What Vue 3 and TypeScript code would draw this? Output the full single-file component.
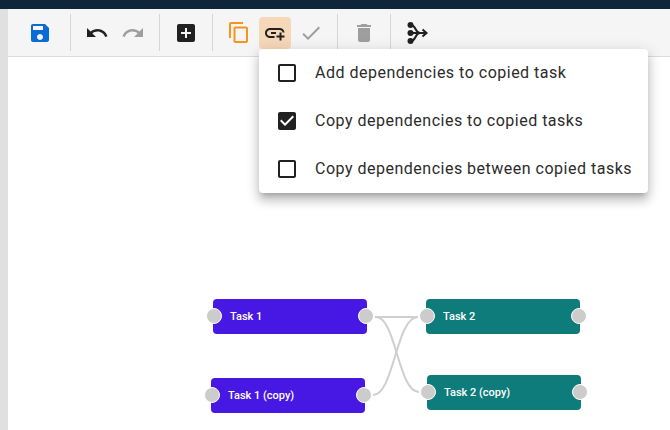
<script setup lang="ts">
interface Opt { label: string; checked: boolean }
interface TaskNode { id: string; label: string; x: number; y: number; kind: string }

const options: Opt[] = [
  { label: 'Add dependencies to copied task', checked: false },
  { label: 'Copy dependencies to copied tasks', checked: true },
  { label: 'Copy dependencies between copied tasks', checked: false },
]

const nodes: TaskNode[] = [
  { id: 'a', label: 'Task 1', x: 205, y: 242, kind: 'purple' },
  { id: 'b', label: 'Task 1 (copy)', x: 203, y: 321, kind: 'purple' },
  { id: 'c', label: 'Task 2', x: 418, y: 242, kind: 'teal' },
  { id: 'd', label: 'Task 2 (copy)', x: 419, y: 318, kind: 'teal' },
]

const edges: string[] = [
  'M375 317 H418',
  'M376 317 C396 317 398 392 419 392',
  'M373 395 C394 395 396 317 418 317',
]

const pos = (n: TaskNode) => ({ left: `${n.x}px`, top: `${n.y}px` })
</script>

<template>
  <div class="page">
    <div class="topbar"></div>
    <div class="body">
      <div class="rail"></div>
      <div class="main">
        <div class="toolbar">
          <div class="group first">
            <button class="btn"><svg viewBox="0 0 24 24" class="blue"><path d="M17 3H5c-1.11 0-2 .9-2 2v14c0 1.1.89 2 2 2h14c1.1 0 2-.9 2-2V7l-4-4zm-5 16c-1.66 0-3-1.34-3-3s1.34-3 3-3 3 1.34 3 3-1.34 3-3 3zm3-10H5V5h10v4z"/></svg></button>
          </div>
          <div class="group">
            <button class="btn"><svg viewBox="0 0 24 24" class="dark"><path d="M12.5 8c-2.65 0-5.05.99-6.9 2.6L2 7v9h9l-3.62-3.62c1.39-1.16 3.16-1.88 5.12-1.88 3.54 0 6.55 2.31 7.6 5.5l2.37-.78C21.08 11.03 17.15 8 12.5 8z"/></svg></button>
            <button class="btn"><svg viewBox="0 0 24 24" class="muted"><path d="M18.4 10.6C16.55 8.99 14.15 8 11.5 8c-4.65 0-8.58 3.03-9.96 7.22L3.9 16c1.05-3.19 4.05-5.5 7.6-5.5 1.95 0 3.73.72 5.12 1.88L13 16h9V7l-3.6 3.6z"/></svg></button>
          </div>
          <div class="group">
            <button class="btn"><svg viewBox="0 0 24 24" class="dark"><path d="M19 3H5c-1.11 0-2 .9-2 2v14c0 1.1.89 2 2 2h14c1.1 0 2-.9 2-2V5c0-1.1-.9-2-2-2zm-2 10h-4v4h-2v-4H7v-2h4V7h2v4h4v2z"/></svg></button>
          </div>
          <div class="group">
            <button class="btn"><svg viewBox="0 0 24 24" class="orange"><path d="M16 1H4c-1.1 0-2 .9-2 2v14h2V3h12V1zm3 4.5H8.5C7.4 5.5 6.5 6.4 6.5 7.5V20c0 1.1.9 2 2 2H19c1.1 0 2-.9 2-2V7.5c0-1.1-.9-2-2-2zm0 14.5H8.5V7.5H19V20z"/></svg></button>
            <button class="btn active"><svg viewBox="0 0 24 24" class="dark"><path d="M7 7C4.24 7 2 9.24 2 12S4.24 17 7 17H11.5V15.1H7C5.29 15.1 3.9 13.71 3.9 12S5.29 8.9 7 8.9H16.5C18.2 8.9 19.5 10.1 19.6 11.5H21.5C21.4 9 19.3 7 16.5 7H7M8 11V13H13V11H8M16.5 11.5V14.5H13.5V16.5H16.5V19.5H18.5V16.5H21.5V14.5H18.5V11.5H16.5"/></svg></button>
            <button class="btn"><svg viewBox="0 0 24 24" class="muted"><path d="M9 16.17L4.83 12l-1.42 1.41L9 19 21 7l-1.41-1.41z"/></svg></button>
          </div>
          <div class="group">
            <button class="btn"><svg viewBox="0 0 24 24" class="muted"><path d="M6 19c0 1.1.9 2 2 2h8c1.1 0 2-.9 2-2V7H6v12zM19 4h-3.5l-1-1h-5l-1 1H5v2h14V4z"/></svg></button>
          </div>
          <div class="group last">
            <button class="btn"><svg viewBox="0 0 24 24" class="dark"><circle cx="5.5" cy="4" r="3"/><circle cx="5.5" cy="12" r="3"/><circle cx="5.5" cy="20" r="3"/><path class="line" d="M6 4C11 4 10 12 15 12M6 20C11 20 10 12 15 12M6 12H21M17.5 8.5L21.5 12 17.5 15.5"/></svg></button>
          </div>
        </div>

        <div class="canvas">
          <svg class="wires" width="662" height="373" viewBox="8 57 662 373">
            <path v-for="d in edges" :key="d" :d="d" />
          </svg>
          <div v-for="n in nodes" :key="n.id" class="node" :class="n.kind" :style="pos(n)">
            <span class="port left"></span>
            <span class="node-label">{{ n.label }}</span>
            <span class="port right"></span>
          </div>
        </div>
      </div>
    </div>

    <div class="menu">
      <div v-for="o in options" :key="o.label" class="item">
        <svg viewBox="0 0 24 24" class="cb">
          <path v-if="o.checked" d="M19 3H5c-1.11 0-2 .9-2 2v14c0 1.1.89 2 2 2h14c1.11 0 2-.9 2-2V5c0-1.1-.89-2-2-2zm-9 14l-5-5 1.41-1.41L10 14.17l7.59-7.59L19 8l-9 9z"/>
          <path v-else d="M19 5v14H5V5h14m0-2H5c-1.1 0-2 .9-2 2v14c0 1.1.9 2 2 2h14c1.1 0 2-.9 2-2V5c0-1.1-.9-2-2-2z"/>
        </svg>
        <span class="item-label">{{ o.label }}</span>
      </div>
    </div>
  </div>
</template>

<style>
html, body { margin: 0; background: #fff; overflow: hidden; }
</style>

<style scoped>
.page {
  position: relative;
  width: 670px;
  height: 430px;
  overflow: hidden;
  display: flex;
  flex-direction: column;
  font-family: Roboto, "Liberation Sans", sans-serif;
}
.topbar { height: 9px; flex: none; background: #0f263a; }
.body { flex: 1; display: flex; min-height: 0; }
.rail { width: 8px; flex: none; background: #e0e0e0; }
.main { flex: 1; display: flex; flex-direction: column; min-width: 0; }
.toolbar {
  height: 48px;
  flex: none;
  box-sizing: border-box;
  display: flex;
  align-items: center;
  background: #f5f5f5;
  border-bottom: 1px solid #dcdcdc;
}
.group {
  height: 37px;
  display: flex;
  align-items: center;
  gap: 4px;
  padding: 0 10px;
  border-right: 1px solid #d5d5d5;
}
.group.first { padding: 0 14px 0 16px; }
.group.last { border-right: 0; }
.btn {
  width: 32px;
  height: 32px;
  padding: 0;
  border: 0;
  border-radius: 4px;
  background: transparent;
  display: flex;
  align-items: center;
  justify-content: center;
}
.btn.active { background: #f6d7b8; }
.btn svg { width: 24px; height: 24px; display: block; }
.blue { fill: #0b6bd6; }
.dark { fill: #212121; }
.muted { fill: #9e9e9e; }
.orange { fill: #f7931e; }
.line { fill: none; stroke: #212121; stroke-width: 2; }

.canvas { position: relative; flex: 1; background: #fff; }
.wires { position: absolute; left: 0; top: 0; }
.wires path { fill: none; stroke: #cfcfcf; stroke-width: 2; }
.node {
  position: absolute;
  width: 154px;
  height: 34.5px;
  border-radius: 4px;
  display: flex;
  align-items: center;
  color: #fff;
  box-sizing: border-box;
  padding: 1px 0 0 17px;
}
.node.purple { background: #4717e3; }
.node.teal { background: #0e7c7b; }
.node-label { font-size: 11px; font-weight: 500; }
.port {
  position: absolute;
  top: 50%;
  width: 14px;
  height: 14px;
  margin-top: -8px;
  border-radius: 50%;
  background: #cccccc;
  border: 1.5px solid #fff;
}
.port.left { left: -7px; }
.port.right { right: -7px; }

.menu {
  position: absolute;
  left: 259px;
  top: 49px;
  width: 389px;
  background: #fff;
  border-radius: 4px;
  box-shadow: 0 5px 5px -3px rgba(0,0,0,.2), 0 8px 10px 1px rgba(0,0,0,.14), 0 3px 14px 2px rgba(0,0,0,.12);
}
.item {
  height: 48px;
  display: flex;
  align-items: center;
  padding-left: 16px;
  gap: 16px;
}
.cb { width: 24px; height: 24px; fill: #212121; flex: none; }
.item-label {
  font-size: 16px;
  letter-spacing: 0.5px;
  color: #2b2b2b;
  white-space: nowrap;
  padding-bottom: 2px;
}
</style>
